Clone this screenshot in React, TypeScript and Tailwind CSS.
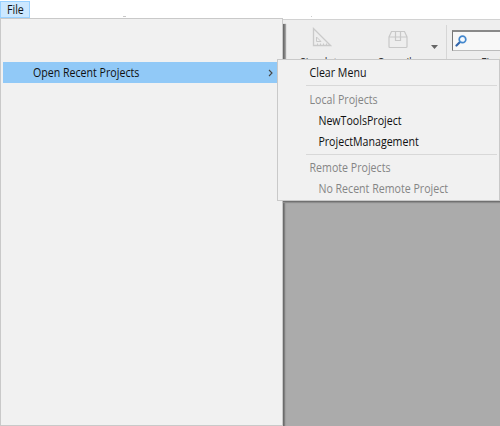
import React from "react";

function Label({ children, className = "" }: { children: React.ReactNode; className?: string }) {
  return <span className={"block origin-left scale-x-[0.885] whitespace-nowrap " + className}>{children}</span>;
}

function SetSquareIcon() {
  return (
    <svg className="block" width="20" height="20" viewBox="0 0 20 20" fill="none" stroke="#cacaca">
      <path d="M1.5 1.5V18.5H18.5Z" strokeWidth="1.3" />
      <path d="M4.5 10V14.5H9Z" />
      <path d="M5.5 18V16.5M8.5 18V16.5M11.5 18V16.5M14.5 18V16.5" />
    </svg>
  );
}

function PackageIcon() {
  return (
    <svg className="block" width="20" height="19" viewBox="0 0 20 19" fill="none" stroke="#c8c8c8" strokeWidth="1.2">
      <path d="M1 7L3.5 1.5H16.5L19 7V16.5Q19 17.5 18 17.5H2Q1 17.5 1 16.5ZM1 7H19M7.5 1.5V10.5H12.5V1.5" />
    </svg>
  );
}

function SearchIcon() {
  return (
    <svg className="block" width="12" height="12" viewBox="0 0 12 12" fill="none">
      <path d="M5 7L1.5 10.5" stroke="#3264a9" strokeWidth="2.2" strokeLinecap="round" />
      <circle cx="7.5" cy="4.4" r="3.3" fill="#f5faff" stroke="#4387cd" strokeWidth="1.7" />
    </svg>
  );
}

function Toolbar() {
  return (
    <div className="flex h-[61px] border-t border-[#d2d2d2] bg-[#eeeeee] pl-[300px] text-[12px] leading-4 text-[#333]">
      <div className="w-[77px] shrink-0 pt-[7px]">
        <div className="ml-3"><SetSquareIcon /></div>
        <Label className="mt-[8px]">Simulate</Label>
      </div>
      <div className="w-[53px] shrink-0 pt-[10px]">
        <div className="ml-[11px]"><PackageIcon /></div>
        <Label className="mt-[6px]">Compile</Label>
      </div>
      <div className="w-4 shrink-0 pt-[25px]">
        <svg className="ml-[1px] block" width="7" height="4" viewBox="0 0 7 4"><path d="M0 0H7L3.5 4Z" fill="#656565" /></svg>
      </div>
      <div className="mt-[5px] h-10 w-px shrink-0 bg-[#d6d6d6]" />
      <div className="ml-[5px] min-w-0 flex-1 pt-[10px]">
        <div className="flex h-[21px] items-center border-t-2 border-b border-l border-t-[#8a8a8a] border-b-[#bcbcbc] border-l-[#777] bg-[#f8f8f8] pl-[2px]"><SearchIcon /></div>
        <Label className="mt-[4px] ml-[29px]">Find</Label>
      </div>
    </div>
  );
}

function FileMenu() {
  return (
    <div className="absolute top-[18px] left-0 h-[408px] w-[283px] border border-[#c9c9c9] bg-[#f1f1f1] pt-[43px] pl-[2px] shadow-[1px_6px_0px_#6c6c6c,2px_6px_0px_#808080,3px_6px_1px_#a0a0a0]">
      <div className="flex h-[21px] items-center justify-between bg-[#91c9f7] pr-[9px] pl-[30px]">
        <Label>Open Recent Projects</Label>
        <svg width="5" height="8" viewBox="0 0 5 8" fill="none" stroke="#444" strokeWidth="1.1"><path d="M1 1L4 4L1 7" /></svg>
      </div>
    </div>
  );
}

function RecentMenu() {
  return (
    <div className="absolute top-[59px] left-[277px] h-[142px] w-[223px] border border-[#c9c9c9] bg-[#f1f1f1] pt-[2px] pr-[2px] pl-7 leading-[21px] shadow-[6px_1px_0px_#707070,6px_2px_1px_#8c8c8c]">
      <Label className="pl-[4px]">Clear Menu</Label>
      <div className="mt-[2px] mb-[3px] h-px bg-[#d8d8d8]" />
      <div className="text-[#858585]"><Label className="pl-[4px]">Local Projects</Label></div>
      <Label className="pl-[14px]">NewToolsProject</Label>
      <Label className="pl-[14px]">ProjectManagement</Label>
      <div className="mt-[2px] mb-[2px] h-px bg-[#d8d8d8]" />
      <div className="text-[#858585]">
        <Label className="pl-[4px]">Remote Projects</Label>
        <Label className="pl-[14px]">No Recent Remote Project</Label>
      </div>
    </div>
  );
}

export default function App() {
  return (
    <div className="relative flex h-[426px] w-[500px] flex-col overflow-hidden bg-white font-['Open_Sans','Noto_Sans',sans-serif] text-[12px] text-[#101010]">
      <header className="flex h-[19px] shrink-0">
        <div className="mt-px flex h-[17px] w-[30px] items-center border border-[#99d1ff] bg-[#cce8ff] pl-[6px]"><Label>File</Label></div>
        <div className="mt-4 ml-[93px] h-px w-[3px] bg-[#c8c8c8]" />
        <div className="mt-4 ml-[185px] h-px w-px bg-[#cccccc]" />
      </header>
      <Toolbar />
      <main className="flex-1 bg-[#ababab]" />
      <FileMenu />
      <RecentMenu />
    </div>
  );
}
